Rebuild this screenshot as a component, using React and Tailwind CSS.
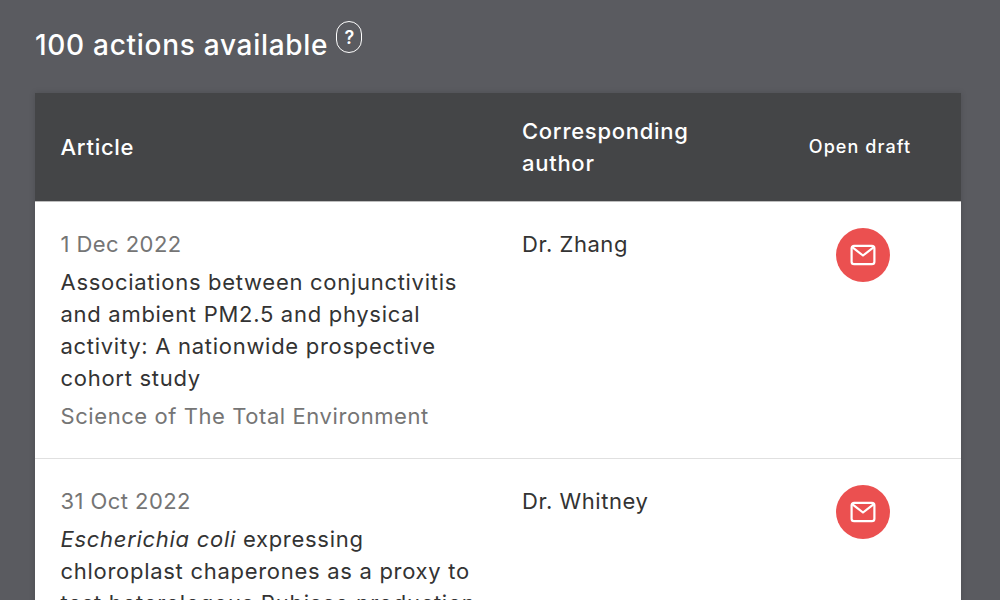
const rows = [
  {
    date: "1 Dec 2022",
    title: "Associations between conjunctivitis and ambient PM2.5 and physical activity: A nationwide prospective cohort study",
    journal: "Science of The Total Environment",
    author: "Dr. Zhang",
  },
  {
    date: "31 Oct 2022",
    title: (
      <>
        <em>Escherichia coli</em> expressing chloroplast chaperones as a proxy to test heterologous Rubisco production
      </>
    ),
    journal: "Journal of Experimental Botany",
    author: "Dr. Whitney",
  },
];

function MailIcon() {
  return (
    <svg width="26" height="22" viewBox="0 0 26 22" fill="none" stroke="currentColor" strokeWidth="2.2" strokeLinecap="round" strokeLinejoin="round">
      <rect x="1.6" y="1.8" width="22.8" height="18.4" rx="2.5" />
      <path d="M2.2 3.2 L13 11.5 L23.8 3.2" />
    </svg>
  );
}

export default function App() {
  return (
    <div className="h-[600px] overflow-hidden bg-[#5a5b60] px-[35px] pt-[28px] font-['Inter',sans-serif] antialiased">
      <div className="flex items-start h-[65px]">
        <h1 className="text-[28px] leading-[34px] font-medium text-white tracking-[0.0255em]">100 actions available</h1>
        <div className="ml-[8px] -mt-[7px] flex h-[32px] w-[26px] items-center justify-center rounded-full border-[1.5px] border-white text-[18px] font-semibold text-white">?</div>
      </div>

      <div className="w-[926px] shadow-[0_0_6px_rgba(0,0,0,0.15)]">
        <div className="grid h-[109px] grid-cols-[461.5px_254px_1fr] items-center border-b border-[#bdbdbd] bg-[#444547] pl-[25.5px] text-white">
          <div className="text-[22px] leading-[32px] font-medium tracking-[0.033em]">Article</div>
          <div className="w-[200px] text-[22px] leading-[32px] font-medium tracking-[0.033em]">Corresponding author</div>
          <div className="pr-[17px] text-center text-[18px] leading-[24px] font-medium tracking-[0.06em]">Open draft</div>
        </div>

        {rows.map((r) => (
          <div key={r.author} className="grid grid-cols-[461.5px_254px_1fr] border-b border-[#e0e0e0] bg-white pl-[25.5px] py-[26px]">
            <div className="w-[420px] text-[22px] leading-[32px] tracking-[0.02em] text-[#333]">
              <div className="text-[#757575]">{r.date}</div>
              <div className="mt-[6px] tracking-[0.0323em]">{r.title}</div>
              <div className="mt-[6px] tracking-[0.026em] text-[#757575]">{r.journal}</div>
            </div>
            <div className="text-[22px] leading-[32px] tracking-[0.025em] text-[#333]">{r.author}</div>
            <div className="flex justify-center pr-[11px]">
              <button className="flex h-[54px] w-[54px] items-center justify-center rounded-full bg-[#eb5050] text-white">
                <MailIcon />
              </button>
            </div>
          </div>
        ))}
      </div>
    </div>
  );
}
